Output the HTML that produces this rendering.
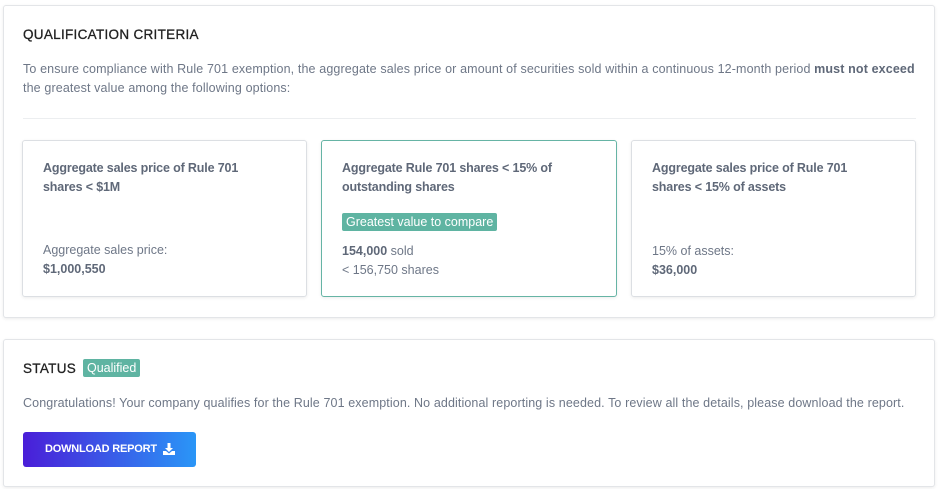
<!DOCTYPE html>
<html><head><style>
body{margin:0;background:#fff;width:939px;height:489px;position:relative;font-family:"Liberation Sans",sans-serif;overflow:hidden}
.card{position:absolute;left:3px;width:930px;background:#fff;border:1px solid #e3e5e8;border-radius:3px;box-shadow:0 1px 3px rgba(0,0,0,.08)}
.t{position:absolute;left:19px;font-size:13.5px;color:#222;letter-spacing:.3px;-webkit-text-stroke:.3px #222}
.p{position:absolute;left:19px;font-size:12.5px;color:#6e7787;line-height:19px;letter-spacing:.13px}
.ic{position:absolute;top:134px;height:157px;border:1px solid #dcdfe3;border-radius:3px;box-sizing:border-box;box-shadow:0 1px 3px rgba(0,0,0,.08)}
.h{position:absolute;left:20px;top:18px;font-size:12.5px;font-weight:bold;color:#5f6878;line-height:19px;letter-spacing:-.15px}
.l{position:absolute;left:20px;font-size:12.5px;color:#6e7787;line-height:19px}
.v{font-weight:bold;color:#5f6878}
.badge{background:#5fb4a2;color:#fff;font-size:12.5px;padding:2px 4px;border-radius:2px}
</style></head><body>
<div class="card" style="top:5px;height:311px">
 <div class="t" style="top:21px">QUALIFICATION CRITERIA</div>
 <div class="p" style="top:54px">To ensure compliance with Rule 701 exemption, the aggregate sales price or amount of securities sold within a continuous 12-month period <b style="color:#5f6878">must not exceed</b><br>the greatest value among the following options:</div>
 <div style="position:absolute;left:19px;top:112px;width:893px;height:1px;background:#eceef0"></div>
 <div class="ic" style="left:18px;width:285px">
  <div class="h">Aggregate sales price of Rule 701<br>shares &lt; $1M</div>
  <div class="l" style="top:100px">Aggregate sales price:<br><span class="v">$1,000,550</span></div>
 </div>
 <div class="ic" style="left:317px;width:296px;border:1.5px solid #66b4a5">
  <div class="h">Aggregate Rule 701 shares &lt; 15% of<br>outstanding shares</div>
  <div style="position:absolute;left:20px;top:72px"><span class="badge">Greatest value to compare</span></div>
  <div class="l" style="top:101px"><span class="v">154,000</span> sold<br>&lt; 156,750 shares</div>
 </div>
 <div class="ic" style="left:627px;width:285px">
  <div class="h">Aggregate sales price of Rule 701<br>shares &lt; 15% of assets</div>
  <div class="l" style="top:101px">15% of assets:<br><span class="v">$36,000</span></div>
 </div>
</div>
<div class="card" style="top:339px;height:146px">
 <div class="t" style="top:21px">STATUS</div>
 <div style="position:absolute;left:79px;top:19px"><span class="badge">Qualified</span></div>
 <div class="p" style="top:54px;letter-spacing:.11px">Congratulations! Your company qualifies for the Rule 701 exemption. No additional reporting is needed. To review all the details, please download the report.</div>
 <div style="position:absolute;left:19px;top:92px;width:173px;height:35px;border-radius:3px;background:linear-gradient(90deg,#4a1ed8,#2a96f7);color:#fff;font-size:11px;font-weight:bold;line-height:35px;text-indent:22px;letter-spacing:-.2px">DOWNLOAD REPORT
  <svg width="12" height="12" viewBox="0 0 12 12" style="position:absolute;left:140px;top:11px"><path d="M4.5 0h3v5h2.5L6 9 2 5h2.5z" fill="#fff"/><path d="M0 8h3l3 2.5L9 8h3v4H0z" fill="#fff"/></svg>
 </div>
</div>
</body></html>
